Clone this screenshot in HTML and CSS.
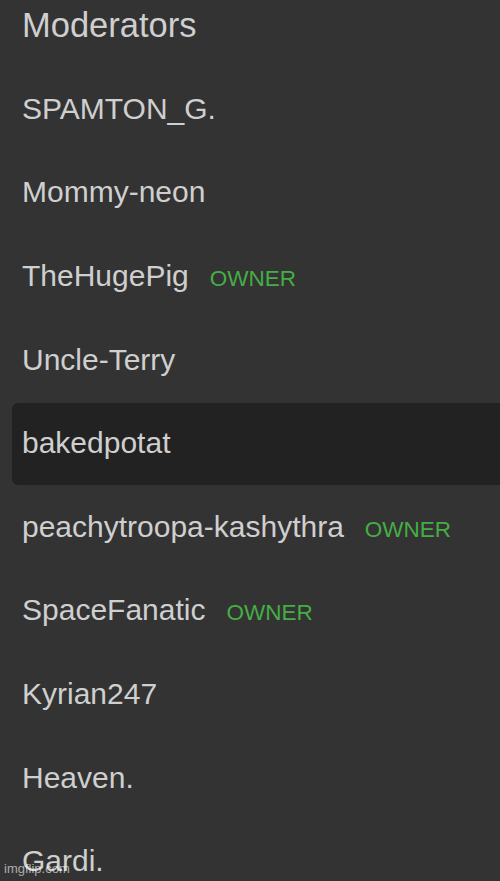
FILE: index.html
```html
<!DOCTYPE html>
<html lang="en">
<head>
    <meta charset="UTF-8">
    <meta name="viewport" content="width=device-width, initial-scale=1.0">
    <title>Moderators</title>
    <link rel="stylesheet" href="styles.css">
</head>
<body>
    <div class="panel">
        <h2 class="panel-title">Moderators</h2>
        <ul class="mod-list">
            <li class="mod">SPAMTON_G.</li>
            <li class="mod">Mommy-neon</li>
            <li class="mod">TheHugePig <span class="tag">Owner</span></li>
            <li class="mod">Uncle-Terry</li>
            <li class="mod active">bakedpotat</li>
            <li class="mod">peachytroopa-kashythra <span class="tag">Owner</span></li>
            <li class="mod">SpaceFanatic <span class="tag">Owner</span></li>
            <li class="mod">Kyrian247</li>
            <li class="mod">Heaven.</li>
            <li class="mod">Gardi.</li>
        </ul>
    </div>
    <div class="watermark">imgflip.com</div>
</body>
</html>
```

FILE: styles.css
```css
html, body {
    margin: 0;
    height: 100%;
    overflow: hidden;
}
body {
    font-family: "Liberation Sans", Arial, sans-serif;
    background-color: #333333;
    color: #cfcfcf;
}
.panel {
    padding-left: 12px;
}
.panel-title {
    margin: 0 0 23.6px 0;
    padding: 5.2px 0 0 10px;
    font-size: 34.5px;
    font-weight: normal;
    line-height: 40px;
    color: #cfcfcf;
}
.mod-list {
    list-style: none;
    margin: 0;
    padding: 0;
}
.mod {
    display: flex;
    align-items: baseline;
    height: 81.6px;
    margin: 0 0 2px 0;
    padding: 23px 0 0 10px;
    box-sizing: border-box;
    font-size: 30px;
    line-height: 34px;
    white-space: nowrap;
}
.mod.active {
    background-color: #222222;
    border-radius: 6px 0 0 6px;
}
.tag {
    margin-left: 21px;
    font-size: 22.5px;
    text-transform: uppercase;
    color: #45ad45;
}
.watermark {
    position: absolute;
    left: 4px;
    bottom: 5px;
    font-size: 13px;
    color: rgba(255, 255, 255, 0.6);
}
```
